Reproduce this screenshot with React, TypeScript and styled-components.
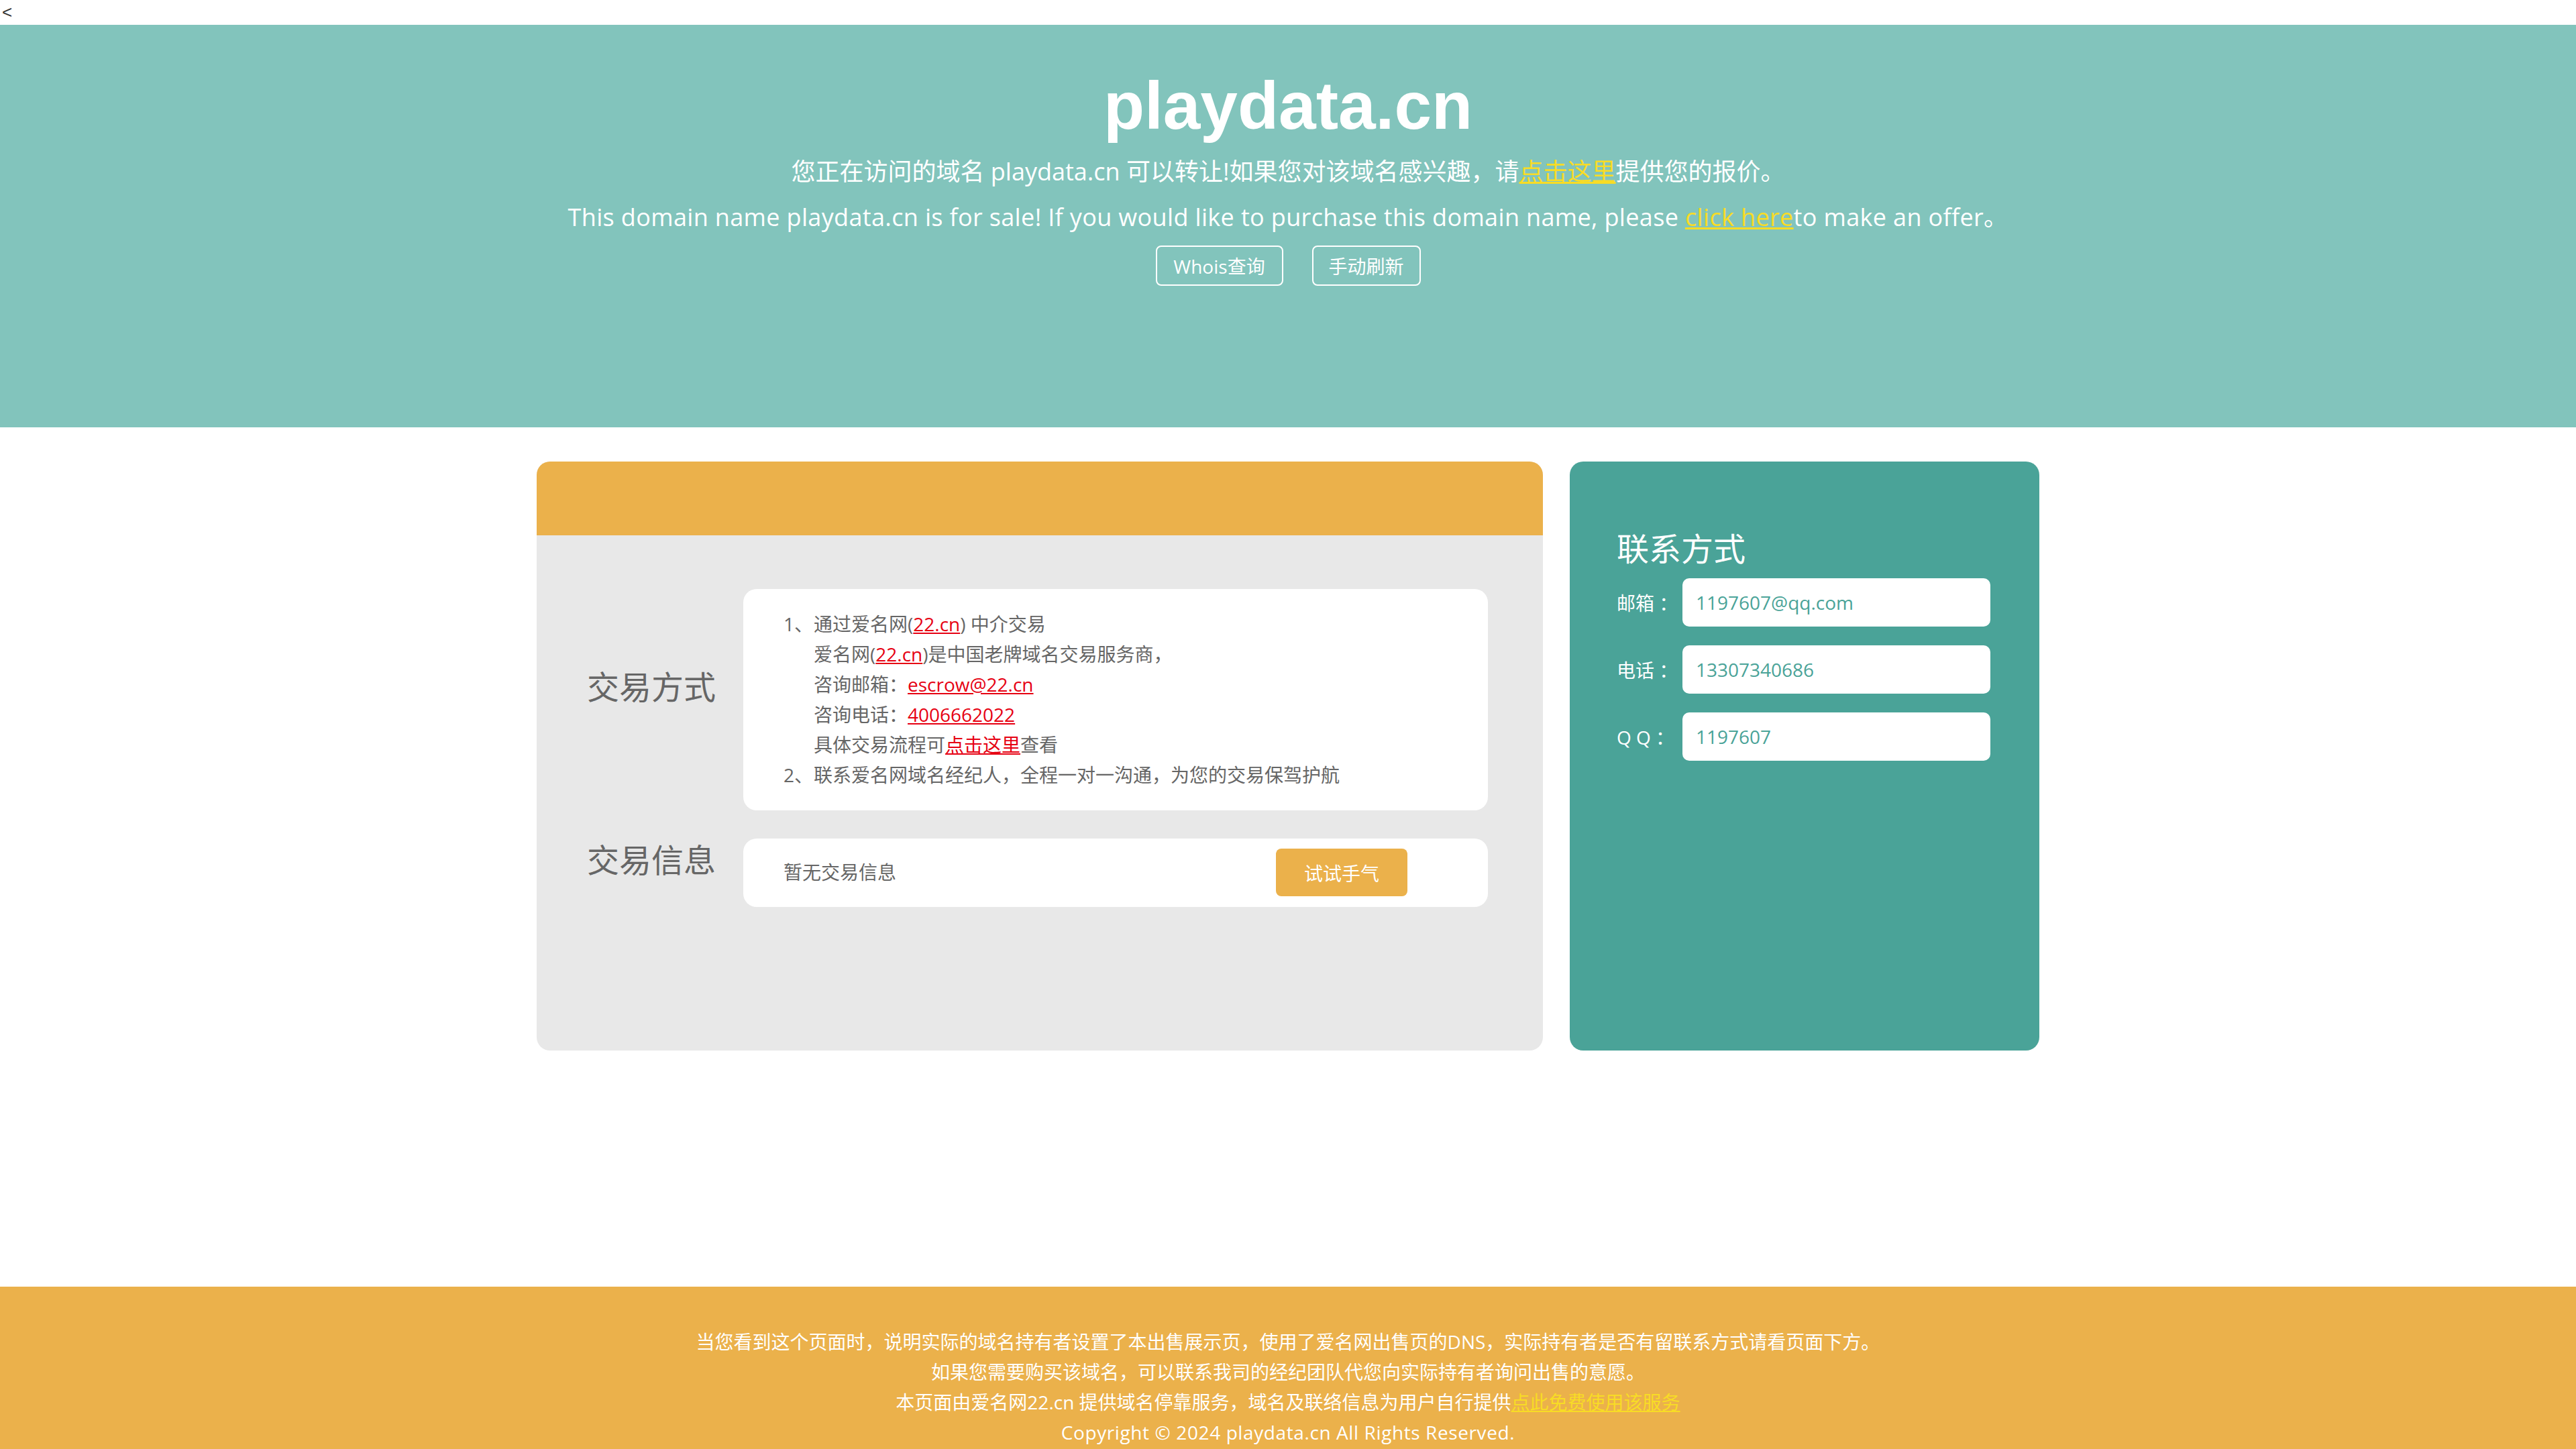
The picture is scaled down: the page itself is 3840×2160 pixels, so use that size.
import React from "react";
import styled, { createGlobalStyle } from "styled-components";

const FONT = '"Open Sans", "Noto Sans CJK SC", sans-serif';

const Global = createGlobalStyle`
  html, body { margin: 0; padding: 0; background: #ffffff; }
  body { font-family: ${FONT}; color: #666666; }
  a { text-decoration: underline; }
`;

const TopMark = styled.div`
  height: 37px;
  line-height: 37px;
  padding-left: 3px;
  font-family: "Liberation Sans", sans-serif;
  font-size: 26px;
  color: #333333;
`;

const Banner = styled.header`
  height: 600px;
  box-sizing: border-box;
  padding-top: 63px;
  background: #82c4bc;
  color: #ffffff;
  text-align: center;
`;

const Title = styled.h1`
  margin: 0;
  font-family: "Liberation Sans", Arial, sans-serif;
  font-size: 100px;
  line-height: 115px;
  font-weight: 700;
`;

const Lead = styled.p<{ $first?: boolean; $spacing?: number }>`
  margin: ${(p) => (p.$first ? "7px" : "0")} 0 0;
  font-size: 36px;
  line-height: 68px;
  letter-spacing: ${(p) => p.$spacing ?? 0}px;
`;

const YellowLink = styled.a`
  color: #f8dc25;
`;

const ButtonRow = styled.div`
  display: flex;
  justify-content: center;
  gap: 43px;
  margin-top: 8px;
`;

const GhostButton = styled.button<{ $w: number }>`
  width: ${(p) => p.$w}px;
  height: 60px;
  border: 2px solid #ffffff;
  border-radius: 8px;
  background: transparent;
  color: #ffffff;
  font-family: ${FONT};
  font-size: 28px;
  padding: 0;
`;

const Main = styled.main`
  width: 2240px;
  margin: 51px auto 352px;
  display: flex;
  gap: 40px;
`;

const TradeCard = styled.section`
  width: 1500px;
  height: 878px;
  background: #e8e8e8;
  border-radius: 20px;
  overflow: hidden;
`;

const TradeHeader = styled.div`
  height: 110px;
  background: #ebb14b;
`;

const TradeBody = styled.div`
  display: grid;
  grid-template-columns: 233px 1110px;
  row-gap: 42px;
  padding: 80px 82px 0 75px;
`;

const SideLabel = styled.div`
  align-self: center;
  padding-bottom: 38px;
  font-size: 48px;
  line-height: 60px;
  color: #666666;
`;

const WhiteBox = styled.div`
  background: #ffffff;
  border-radius: 20px;
  box-sizing: border-box;
  padding: 30px 60px;
  font-size: 28px;
  line-height: 45px;
  color: #666666;
`;

const ListItem = styled.div`
  display: flex;
`;

const Num = styled.span`
  width: 45px;
  flex: none;
`;

const Lines = styled.div`
  display: flex;
  flex-direction: column;
`;

const RedLink = styled.a`
  color: #e60012;
`;

const InfoBox = styled(WhiteBox)`
  display: flex;
  align-items: center;
  justify-content: space-between;
  padding: 15px 120px 16px 60px;
`;

const TryButton = styled.button`
  width: 196px;
  height: 71px;
  border: none;
  border-radius: 8px;
  background: #ebb14b;
  color: #ffffff;
  font-family: ${FONT};
  font-size: 28px;
  padding: 0;
`;

const ContactCard = styled.aside`
  width: 700px;
  height: 878px;
  box-sizing: border-box;
  padding: 100px 73px 0 70px;
  background: #4aa398;
  border-radius: 20px;
  color: #ffffff;
`;

const ContactTitle = styled.h2`
  margin: 0 0 14px;
  font-size: 48px;
  line-height: 60px;
  font-weight: 400;
`;

const ContactRow = styled.div`
  display: flex;
  align-items: center;
  height: 72px;
  margin-bottom: 28px;
`;

const ContactLabel = styled.span`
  width: 98px;
  flex: none;
  font-size: 28px;
  white-space: pre;
`;

const ContactValue = styled.div`
  flex: 1;
  height: 72px;
  display: flex;
  align-items: center;
  box-sizing: border-box;
  padding-left: 20px;
  background: #ffffff;
  border-radius: 10px;
  color: #4aa398;
  font-size: 28px;
`;

const Footer = styled.footer`
  background: #ebb14b;
  padding: 60px 0;
  text-align: center;
  color: #ffffff;
  font-size: 28px;
  line-height: 45px;
`;

const FooterLine = styled.p<{ $spacing?: number }>`
  margin: 0;
  letter-spacing: ${(p) => p.$spacing ?? 0}px;
`;

const contacts = [
  { label: "邮箱 ：", value: "1197607@qq.com" },
  { label: "电话 ：", value: "13307340686" },
  { label: "Q Q ：", value: "1197607" },
];

export default function App() {
  return (
    <>
      <Global />
      <TopMark>&lt;</TopMark>
      <Banner>
        <Title>playdata.cn</Title>
        <Lead $first>
          您正在访问的域名 playdata.cn 可以转让!如果您对该域名感兴趣，请
          <YellowLink href="#">点击这里</YellowLink>提供您的报价。
        </Lead>
        <Lead $spacing={0.35}>
          This domain name playdata.cn is for sale! If you would like to purchase this domain name, please{" "}
          <YellowLink href="#">click here</YellowLink>to make an offer。
        </Lead>
        <ButtonRow>
          <GhostButton $w={190}>Whois查询</GhostButton>
          <GhostButton $w={162}>手动刷新</GhostButton>
        </ButtonRow>
      </Banner>

      <Main>
        <TradeCard>
          <TradeHeader />
          <TradeBody>
            <SideLabel>交易方式</SideLabel>
            <WhiteBox>
              <ListItem>
                <Num>1、</Num>
                <Lines>
                  <span>
                    通过爱名网(<RedLink href="#">22.cn</RedLink>) 中介交易
                  </span>
                  <span>
                    爱名网(<RedLink href="#">22.cn</RedLink>)是中国老牌域名交易服务商，
                  </span>
                  <span>
                    咨询邮箱：<RedLink href="#">escrow@22.cn</RedLink>
                  </span>
                  <span>
                    咨询电话：<RedLink href="#">4006662022</RedLink>
                  </span>
                  <span>
                    具体交易流程可<RedLink href="#">点击这里</RedLink>查看
                  </span>
                </Lines>
              </ListItem>
              <ListItem>
                <Num>2、</Num>
                <Lines>
                  <span>联系爱名网域名经纪人，全程一对一沟通，为您的交易保驾护航</span>
                </Lines>
              </ListItem>
            </WhiteBox>

            <SideLabel>交易信息</SideLabel>
            <InfoBox>
              <span>暂无交易信息</span>
              <TryButton>试试手气</TryButton>
            </InfoBox>
          </TradeBody>
        </TradeCard>

        <ContactCard>
          <ContactTitle>联系方式</ContactTitle>
          {contacts.map((c) => (
            <ContactRow key={c.label}>
              <ContactLabel>{c.label}</ContactLabel>
              <ContactValue>{c.value}</ContactValue>
            </ContactRow>
          ))}
        </ContactCard>
      </Main>

      <Footer>
        <FooterLine>
          当您看到这个页面时，说明实际的域名持有者设置了本出售展示页，使用了爱名网出售页的DNS，实际持有者是否有留联系方式请看页面下方。
        </FooterLine>
        <FooterLine>如果您需要购买该域名，可以联系我司的经纪团队代您向实际持有者询问出售的意愿。</FooterLine>
        <FooterLine>
          本页面由爱名网22.cn 提供域名停靠服务，域名及联络信息为用户自行提供
          <YellowLink href="#">点此免费使用该服务</YellowLink>
        </FooterLine>
        <FooterLine $spacing={0.6}>Copyright © 2024 playdata.cn All Rights Reserved.</FooterLine>
      </Footer>
    </>
  );
}
